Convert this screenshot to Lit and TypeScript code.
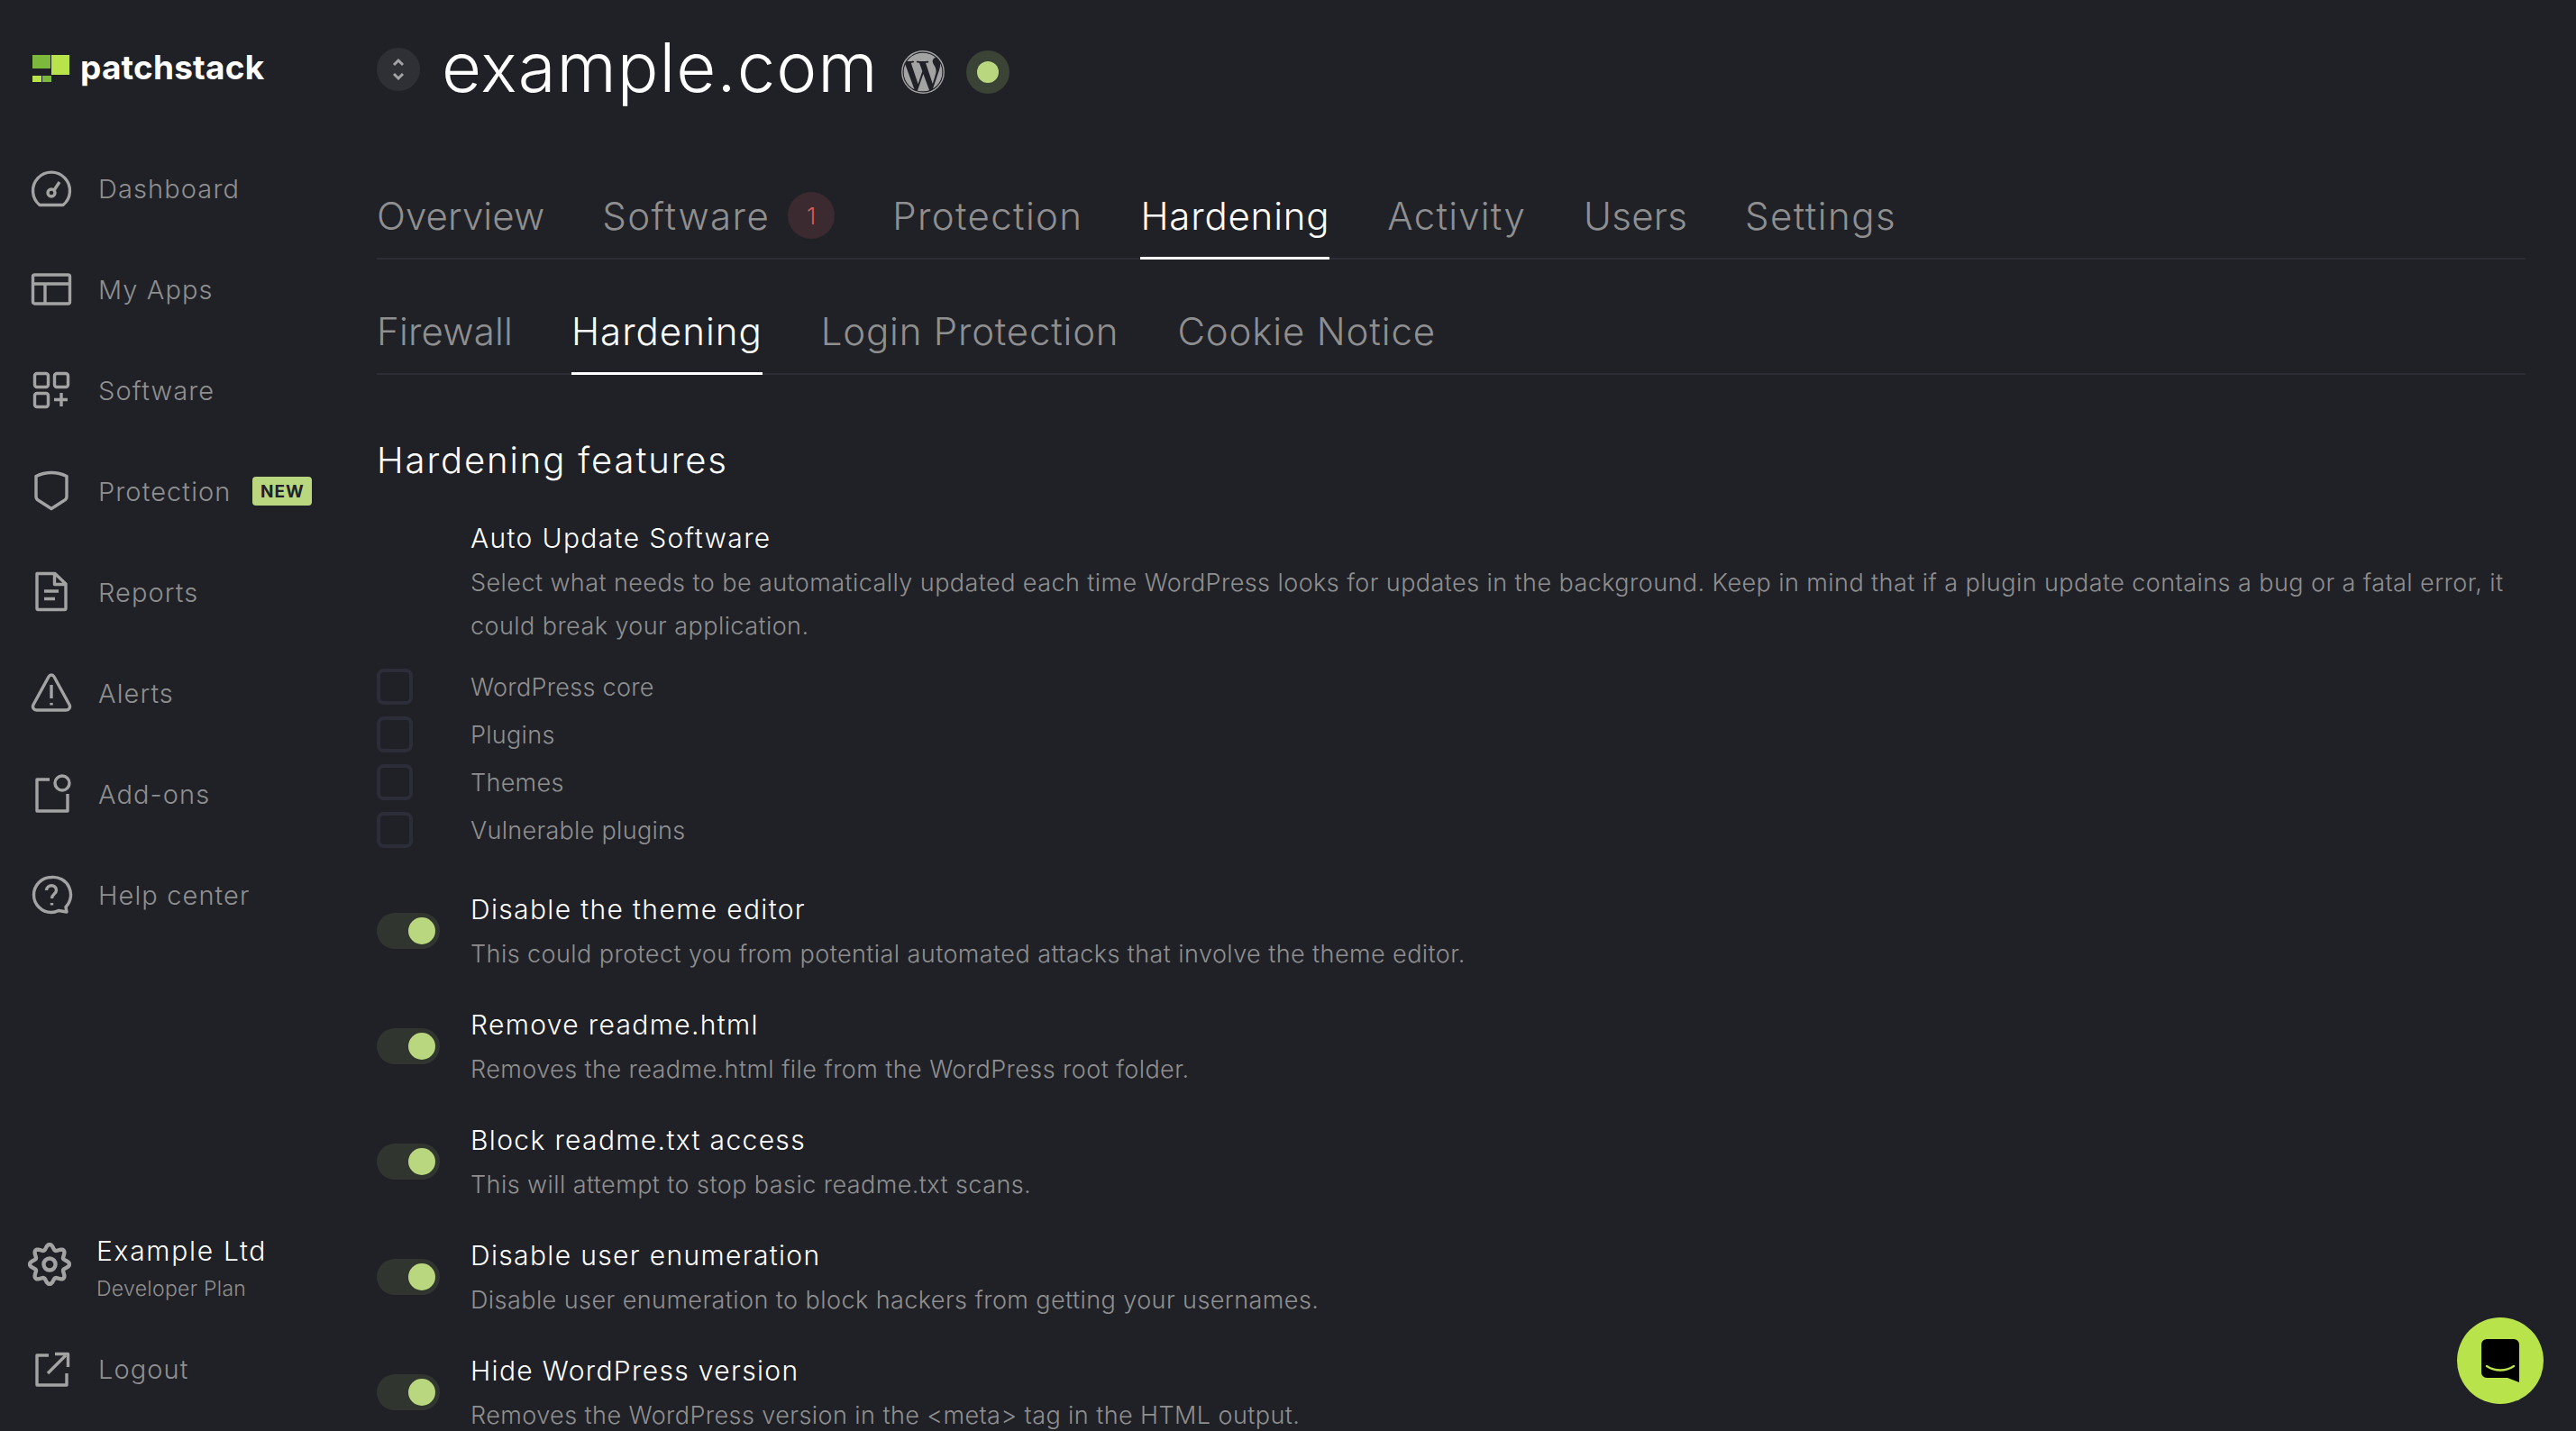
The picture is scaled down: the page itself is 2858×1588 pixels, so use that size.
import { LitElement, html, css, svg } from "lit";
import { customElement } from "lit/decorators.js";

const gearPath = () => {
  const pts: string[] = [];
  for (let i = 0; i < 96; i++) {
    const a = (i / 96) * Math.PI * 2;
    const r = 17.6 + 2.6 * Math.cos(8 * a);
    pts.push(`${(22 + r * Math.cos(a)).toFixed(2)} ${(22 + r * Math.sin(a)).toFixed(2)}`);
  }
  return `M${pts.join("L")}z`;
};

const ICONS: Record<string, any> = {
  dash: svg`<path d="M11 42.5a20.5 20.5 0 1 1 26 0z"/><circle cx="24" cy="29" r="4"/><path d="M27 26l6-9"/>`,
  apps: svg`<rect x="3.5" y="8" width="41" height="32" rx="2"/><path d="M3.5 18h41M17 18v22"/>`,
  soft: svg`<rect x="5.5" y="5.5" width="15" height="15" rx="2.5"/><rect x="27.5" y="5.5" width="15" height="15" rx="2.5"/><rect x="5.5" y="27.5" width="15" height="15" rx="2.5"/><path d="M35 27v15M27 34.5h15"/>`,
  prot: svg`<path d="M24 3.5C30 3.5 36 5 41 7.5V30c0 2-1 3.5-3 4.5L24 43.5 10 34.500c-2-1-3-2.500-3-4.500V7.500C12 5 18 3.500 24 3.500z"/>`,
  rep: svg`<path d="M8 3.500h20L40 15v27a1.500 1.500 0 0 1-1.500 1.500h-29A1.500 1.500 0 0 1 8 42zM27.500 4v11.500H40M16 23h16M16 31.500h12"/>`,
  alert: svg`<path d="M21 6L4 37c-1.500 3 .5 6 3.500 6h33c3 0 5-3 3.500-6L27 6c-1.500-2.600-4.500-2.600-6 0z"/><path d="M24 15v15"/><path d="M24 35v2.500"/>`,
  add: svg`<path d="M22 8H8v35h34V24"/><circle cx="36" cy="12" r="8"/>`,
  help: svg`<path d="M24 4.500a19.500 19.500 0 1 0 0 39c3.500 0 6-1 8-2l9 1.500-1-5.500a19.500 19.500 0 0 0-16-33z"/><path d="M18.500 19c.5-7 11-7 11 0 0 4-5 4-5 9"/><path d="M24.500 33v2.500"/>`,
  gear: svg`<path d="${gearPath()}"/><circle cx="22" cy="22" r="6"/>`,
  out: svg`<path d="M21 9H8v33h33V29"/><path d="M20 29L40 9"/><path d="M28 7.500h14.500V22"/>`,
};

const NAV = [
  ["dash", "Dashboard"],
  ["apps", "My Apps"],
  ["soft", "Software"],
  ["prot", "Protection", "NEW"],
  ["rep", "Reports"],
  ["alert", "Alerts"],
  ["add", "Add-ons"],
  ["help", "Help center"],
];

const TABS: [string, number][] = [["Overview", 0.1], ["Software", 1.45], ["Protection", 1.36], ["Hardening", 0.8], ["Activity", 1.23], ["Users", 0.27], ["Settings", 1.45]];
const SUBS: [string, number][] = [["Firewall", 0.2], ["Hardening", 1], ["Login Protection", 0.8], ["Cookie Notice", 0.85]];
const CHECKS = ["WordPress core", "Plugins", "Themes", "Vulnerable plugins"];
const FEATURES = [
  ["Disable the theme editor", "This could protect you from potential automated attacks that involve the theme editor."],
  ["Remove readme.html", "Removes the readme.html file from the WordPress root folder."],
  ["Block readme.txt access", "This will attempt to stop basic readme.txt scans."],
  ["Disable user enumeration", "Disable user enumeration to block hackers from getting your usernames."],
  ["Hide WordPress version", "Removes the WordPress version in the <meta> tag in the HTML output."],
];

const WP = "M21.469 6.825c.84 1.537 1.318 3.3 1.318 5.175 0 3.979-2.156 7.456-5.363 9.325l3.295-9.527c.615-1.54.82-2.771.82-3.864 0-.405-.026-.78-.07-1.11m-7.981.105c.647-.03 1.232-.105 1.232-.105.582-.075.514-.93-.067-.899 0 0-1.755.135-2.88.135-1.064 0-2.85-.15-2.85-.15-.585-.03-.661.855-.075.885 0 0 .54.061 1.125.09l1.68 4.605-2.37 7.08L5.354 6.9c.649-.03 1.234-.1 1.234-.1.585-.075.516-.93-.065-.896 0 0-1.746.138-2.874.138-.2 0-.438-.008-.69-.015C4.911 3.15 8.235 1.215 12 1.215c2.809 0 5.365 1.072 7.286 2.833-.046-.003-.091-.009-.141-.009-1.06 0-1.812.923-1.812 1.914 0 .89.513 1.643 1.06 2.531.411.72.89 1.643.89 2.977 0 .915-.354 1.994-.821 3.479l-1.075 3.585-3.9-11.61.001.014zM12 22.784c-1.059 0-2.081-.153-3.048-.437l3.237-9.406 3.315 9.087c.024.053.05.101.078.149-1.12.393-2.325.609-3.582.609M1.211 12c0-1.564.336-3.05.935-4.39L7.29 21.709C3.694 19.96 1.212 16.271 1.211 12M12 0C5.385 0 0 5.385 0 12s5.385 12 12 12 12-5.385 12-12S18.615 0 12 0";

@customElement("app-root")
export class AppRoot extends LitElement {
  static styles = css`
    :host { display: block; width: 2858px; height: 1588px; overflow: hidden; background: #202127; font-family: Inter, "Liberation Sans", sans-serif; font-weight: 300; position: relative; }
    .page { display: flex; height: 1588px; }
    .side { width: 418px; flex: none; display: flex; flex-direction: column; padding: 61px 0 13px 33px; box-sizing: border-box; }
    .logo { display: flex; align-items: center; height: 30px; padding-left: 3px; gap: 12px; }
    .logo svg { flex: none; }
    .logo span { color: #fff; font-size: 37px; font-weight: 700; letter-spacing: 0.2px; line-height: 30px; margin-top: -2px; }
    .nav { margin-top: 62px; display: flex; flex-direction: column; }
    .item { height: 112px; display: flex; align-items: center; gap: 28px; color: #8f8f8f; font-size: 29px; letter-spacing: 1.1px; }
    .ic { width: 48px; height: 48px; flex: none; fill: none; stroke: #a3a3a3; stroke-width: 3.4px; stroke-linejoin: round; }
    .new { margin-left: -4px; background: #b9d77f; color: #202127; font-size: 19px; font-weight: 700; width: 66px; height: 32px; border-radius: 4px; display: flex; align-items: center; justify-content: center; letter-spacing: 1px; }
    .foot { margin-top: auto; }
    .acct { display: flex; align-items: center; gap: 28px; margin-left: -2px; margin-bottom: 11px; }
    .acct .ic { margin-bottom: 14px; stroke-width: 4px; }
    .acct b { display: block; font-weight: 300; color: #fff; font-size: 30px; letter-spacing: 1.7px; line-height: 40px; }
    .acct small { display: block; color: #8f8f8f; font-size: 23px; letter-spacing: .3px; line-height: 44px; }
    .main { flex: 1; padding-right: 56px; min-width: 0; }
    .head { height: 194px; padding-bottom: 40px; box-sizing: border-box; display: flex; align-items: center; }
    .updown { width: 48px; height: 48px; border-radius: 50%; background: #2f3036; display: flex; align-items: center; justify-content: center; }
    h1 { margin: -6px 0 0 24px; font-weight: 300; font-size: 76px; letter-spacing: 1px; color: #fff; line-height: 1; }
    .wp { margin: 6px 0 0 25px; width: 48px; height: 48px; flex: none; }
    .status { margin: 6px 0 0 24px; width: 48px; height: 48px; border-radius: 50%; background: #3a4335; display: flex; align-items: center; justify-content: center; }
    .status i { width: 24px; height: 24px; border-radius: 50%; background: #b9d77f; }
    .tabs { height: 94px; display: flex; gap: 64px; border-bottom: 2px solid #2d2e35; box-sizing: border-box; }
    .tabs.sub { margin-top: 34px; gap: 65px; }
    .tab { display: flex; align-items: center; height: 94px; box-sizing: border-box; font-size: 42px; color: #8f8f8f; gap: 20px; white-space: nowrap; padding-bottom: 4px; }
    .tab.on { color: #fff; border-bottom: 3px solid #fff; padding-bottom: 1px; }
    .badge { width: 52px; height: 52px; border-radius: 50%; background: #3b2a2f; color: #d85c5c; font-size: 26px; display: flex; align-items: center; justify-content: center; margin-top: 0; letter-spacing: 0; }
    h2 { margin: 71px 0 0; font-weight: 350; font-size: 40px; letter-spacing: 1.9px; color: #fff; line-height: 48px; height: 48px; }
    .auto { margin: 38px 0 0 104px; }
    .t { color: #fff; font-size: 30px; font-weight: 350; letter-spacing: 1.35px; line-height: 48px; }
    .d { color: #8f8f8f; font-size: 27px; letter-spacing: .43px; line-height: 48px; position: relative; top: 2px; }
    .checks { margin-top: 25px; display: flex; flex-direction: column; gap: 13px; }
    .check { display: flex; align-items: center; height: 40px; }
    .check i { width: 40px; height: 40px; box-sizing: border-box; border: 4px solid #2b2e38; border-radius: 8px; margin-right: 64px; }
    .check span { color: #8f8f8f; font-size: 27px; letter-spacing: .3px; }
    .feats { margin-top: 44px; display: flex; flex-direction: column; gap: 32px; }
    .feat { display: flex; align-items: center; height: 96px; }
    .toggle { width: 70px; height: 40px; border-radius: 20px; background: #30352f; margin-right: 34px; display: flex; align-items: center; justify-content: flex-end; padding-right: 5px; box-sizing: border-box; flex: none; }
    .toggle i { width: 30px; height: 30px; border-radius: 50%; background: #b9d77f; }
    .chat { position: absolute; left: 2726px; top: 1462px; width: 96px; height: 96px; border-radius: 50%; background: #b8e34a; display: flex; align-items: center; justify-content: center; }
  `;

  render() {
    return html`<div class="page">
      <aside class="side">
        <div class="logo">
          <svg width="41" height="30" viewBox="0 0 41 30"><path fill="#7cb83c" d="M0 0h20v15H0zM11 23h10v7H11z"/><path fill="#b8e34a" d="M21 0h20v22H21zM0 23h10v7H0z"/></svg>
          <span>patchstack</span>
        </div>
        <nav class="nav">
          ${NAV.map(([ic, label, tag]) => html`<div class="item"><svg class="ic" viewBox="0 0 48 48">${ICONS[ic]}</svg><span>${label}</span>${tag ? html`<span class="new">${tag}</span>` : ""}</div>`)}
        </nav>
        <div class="foot">
          <div class="acct"><svg class="ic" viewBox="0 0 44 44">${ICONS.gear}</svg><div><b>Example Ltd</b><small>Developer Plan</small></div></div>
          <div class="item"><svg class="ic" viewBox="0 0 48 48">${ICONS.out}</svg><span>Logout</span></div>
        </div>
      </aside>
      <main class="main">
        <header class="head">
          <div class="updown"><svg width="14" height="26" viewBox="0 0 14 26" fill="none" stroke="#a3a3a3" stroke-width="3"><path d="M2 8l5-5 5 5M2 18l5 5 5-5"/></svg></div>
          <h1>example.com</h1>
          <svg class="wp" viewBox="0 0 24 24"><circle cx="12" cy="12" r="10.8" fill="#a3a3a3"/><path fill="#202127" d="${WP}"/><circle cx="12" cy="12" r="11.6" fill="none" stroke="#a3a3a3" stroke-width=".7"/></svg>
          <div class="status"><i></i></div>
        </header>
        <div class="tabs">${TABS.map(([t, ls]) => html`<div class="tab ${t === "Hardening" ? "on" : ""}" style="letter-spacing:${ls}px">${t}${t === "Software" ? html`<span class="badge">1</span>` : ""}</div>`)}</div>
        <div class="tabs sub">${SUBS.map(([t, ls]) => html`<div class="tab ${t === "Hardening" ? "on" : ""}" style="letter-spacing:${ls}px">${t}</div>`)}</div>
        <h2>Hardening features</h2>
        <section class="auto">
          <div class="t">Auto Update Software</div>
          <div class="d">Select what needs to be automatically updated each time WordPress looks for updates in the background. Keep in mind that if a plugin update contains a bug or a fatal error, it could break your application.</div>
        </section>
        <div class="checks">${CHECKS.map((c) => html`<div class="check"><i></i><span>${c}</span></div>`)}</div>
        <div class="feats">${FEATURES.map(([t, d]) => html`<div class="feat"><div class="toggle"><i></i></div><div><div class="t">${t}</div><div class="d">${d}</div></div></div>`)}</div>
      </main>
    </div>
    <div class="chat"><svg width="42" height="48" viewBox="0 0 42 48"><path d="M6 0h30a6 6 0 0 1 6 6v42l-13-5H6a6 6 0 0 1-6-6V6a6 6 0 0 1 6-6z"/><path d="M6 30c9 6 21 6 30 0" fill="none" stroke="#b8e34a" stroke-width="2.500" stroke-linecap="round"/></svg></div>`;
  }
}
